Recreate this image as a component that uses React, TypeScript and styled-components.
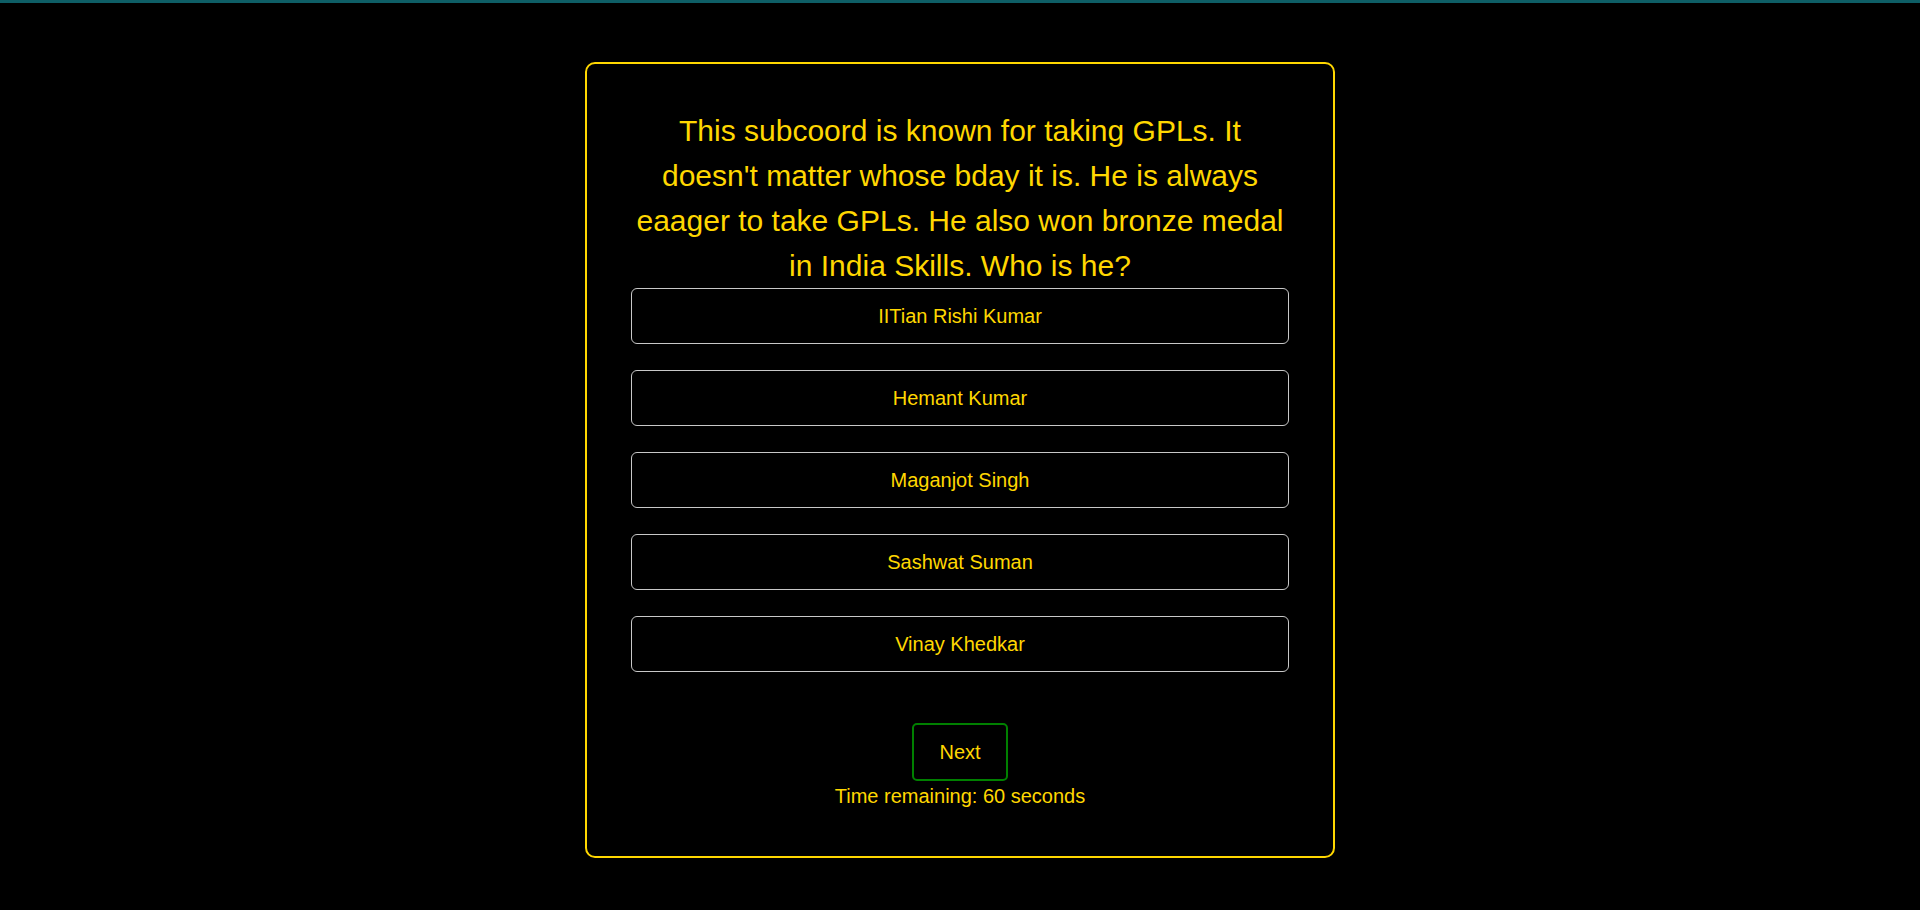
import React from "react";
import styled, { createGlobalStyle } from "styled-components";

const GlobalStyle = createGlobalStyle`
  html, body {
    margin: 0;
    padding: 0;
    background: #000;
  }
  body {
    font-family: "Liberation Sans", Arial, sans-serif;
    min-height: 910px;
  }
`;

const Page = styled.div`
  min-height: 910px;
  background: #000;
  display: flex;
  flex-direction: column;
  align-items: center;
`;

const TopBar = styled.div`
  align-self: stretch;
  height: 3px;
  background: #0e5e66;
`;

const Card = styled.div`
  box-sizing: border-box;
  width: 750px;
  margin-top: 59px;
  border: 2px solid #ffd700;
  border-radius: 10px;
  padding: 44px 0 48px;
  display: flex;
  flex-direction: column;
  align-items: center;
  color: #ffd700;
`;

const Question = styled.h2`
  width: 658px;
  margin: 0;
  font-size: 30px;
  font-weight: 400;
  line-height: 45px;
  text-align: center;
  color: #ffd700;
`;

const Options = styled.div`
  width: 658px;
  display: flex;
  flex-direction: column;
  gap: 26px;
`;

const Option = styled.button`
  box-sizing: border-box;
  height: 56px;
  width: 100%;
  background: #000;
  border: 1px solid #c8c8c8;
  border-radius: 6px;
  color: #ffd700;
  font-family: "Liberation Sans", Arial, sans-serif;
  font-size: 20px;
  cursor: pointer;
`;

const NextButton = styled.button`
  box-sizing: border-box;
  margin-top: 51px;
  width: 96px;
  height: 58px;
  padding: 0;
  background: #000;
  border: 2px solid #008000;
  border-radius: 5px;
  color: #ffd700;
  font-family: "Liberation Sans", Arial, sans-serif;
  font-size: 20px;
  cursor: pointer;
`;

const Timer = styled.p`
  margin: 4px 0 0;
  font-size: 20px;
  line-height: 23px;
  color: #ffd700;
`;

const options = [
  "IITian Rishi Kumar",
  "Hemant Kumar",
  "Maganjot Singh",
  "Sashwat Suman",
  "Vinay Khedkar",
];

export default function App() {
  return (
    <>
      <GlobalStyle />
      <Page>
        <TopBar />
        <Card>
          <Question>
            This subcoord is known for taking GPLs. It doesn't matter whose bday it is. He is
            always eaager to take GPLs. He also won bronze medal in India Skills. Who is he?
          </Question>
          <Options>
            {options.map((o) => (
              <Option key={o}>{o}</Option>
            ))}
          </Options>
          <NextButton>Next</NextButton>
          <Timer>Time remaining: 60 seconds</Timer>
        </Card>
      </Page>
    </>
  );
}
